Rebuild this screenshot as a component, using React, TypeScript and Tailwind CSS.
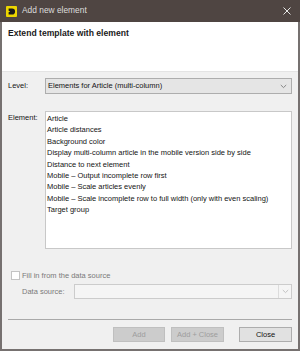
import React from "react";

const items = [
  "Article",
  "Article distances",
  "Background color",
  "Display multi-column article in the mobile version side by side",
  "Distance to next element",
  "Mobile – Output incomplete row first",
  "Mobile – Scale articles evenly",
  "Mobile – Scale incomplete row to full width (only with even scaling)",
  "Target group",
];

const Chevron = ({ color }: { color: string }) => (
  <svg width="7" height="5" viewBox="0 0 7 5" fill="none">
    <path d="M0.8 1 L3.5 3.6 L6.2 1" stroke={color} strokeWidth="0.9" />
  </svg>
);

const Logo = () => (
  <svg width="11" height="11" viewBox="0 0 11 11">
    <rect x="0" y="0" width="11" height="11" rx="1" fill="#ecd500" />
    <path d="M2.6 2.4 H6 A3.1 3.1 0 0 1 6 8.6 H2.6 V6.3 L4.2 5.5 L2.6 4.7 Z" fill="#1a1a1a" />
  </svg>
);

export default function App() {
  return (
    <div
      className="w-[300px] h-[351px] flex flex-col bg-[#f0f0f0] text-[7.5px] leading-[11.4px] text-[#141414] antialiased"
      style={{ fontFamily: '"Liberation Sans", Arial, sans-serif' }}
    >
      {/* Title bar */}
      <div className="h-[22px] shrink-0 bg-[#4f4542] flex items-center pl-[6px] pr-[9px]">
        <Logo />
        <span className="ml-[5px] text-[8.4px] text-[#dedede]">Add new element</span>
        <span className="ml-auto">
          <svg width="8" height="8" viewBox="0 0 8 8">
            <path d="M0.5 0.5 L7.5 7.5 M7.5 0.5 L0.5 7.5" stroke="#e6e6e6" strokeWidth="1" />
          </svg>
        </span>
      </div>

      <div className="flex-1 flex flex-col border-x-2 border-b-2 border-[#767170]">
        {/* Header */}
        <div className="h-[50px] shrink-0 bg-white border-b border-[#e4e4e4] px-[6px] pt-[6px]">
          <span className="font-bold text-[8.6px] leading-[11px] text-[#1a1a1a]">
            Extend template with element
          </span>
        </div>

        {/* Body */}
        <div className="flex-1 flex flex-col px-[6px]">
          {/* Level */}
          <div className="flex items-center mt-[6px]">
            <span className="w-[37px] shrink-0">Level:</span>
            <div className="flex-1 h-[16px] bg-[#e5e5e5] border border-[#adadad] flex items-center pl-[2px] pr-[4px]">
              <span className="flex-1">Elements for Article (multi-column)</span>
              <Chevron color="#7a7a7a" />
            </div>
          </div>

          {/* Element */}
          <div className="flex mt-[17px]">
            <span className="w-[37px] shrink-0 pt-[1px]">Element:</span>
            <div className="flex-1 h-[138px] bg-white border border-[#c8c8c8] pl-[1px] pt-[1px] flex flex-col">
              {items.map((it) => (
                <span key={it} className="whitespace-nowrap">
                  {it}
                </span>
              ))}
            </div>
          </div>

          {/* Checkbox */}
          <div className="flex items-center mt-[21px] pl-[3px] text-[#7a7a7a]">
            <span className="w-[9px] h-[9px] bg-white border border-[#c4c4c4] shrink-0" />
            <span className="ml-[2px]">Fill in from the data source</span>
          </div>

          {/* Data source */}
          <div className="flex items-center mt-[3px] pl-[14px] text-[#7a7a7a]">
            <span className="w-[52px] shrink-0">Data source:</span>
            <div className="flex-1 h-[15px] bg-[#f5f5f5] border border-[#cccccc] flex items-stretch">
              <span className="flex-1" />
              <span className="w-[13px] border-l border-[#dcdcdc] flex items-center justify-center">
                <Chevron color="#bdbdbd" />
              </span>
            </div>
          </div>

          {/* Separator */}
          <div className="mt-[20px] h-px bg-[#a9a9a9]" />

          {/* Buttons */}
          <div className="flex justify-end mt-[7px]">
            <button className="w-[52px] h-[15px] bg-[#cccccc] border border-[#bfbfbf] text-[#9d9d9d] leading-none">
              Add
            </button>
            <button className="ml-[6px] w-[53px] h-[15px] bg-[#cccccc] border border-[#bfbfbf] text-[#9d9d9d] leading-none">
              Add + Close
            </button>
            <button className="ml-[15px] w-[53px] h-[15px] bg-[#e1e1e1] border border-[#adadad] text-[#111] leading-none">
              Close
            </button>
          </div>
        </div>
      </div>
    </div>
  );
}
